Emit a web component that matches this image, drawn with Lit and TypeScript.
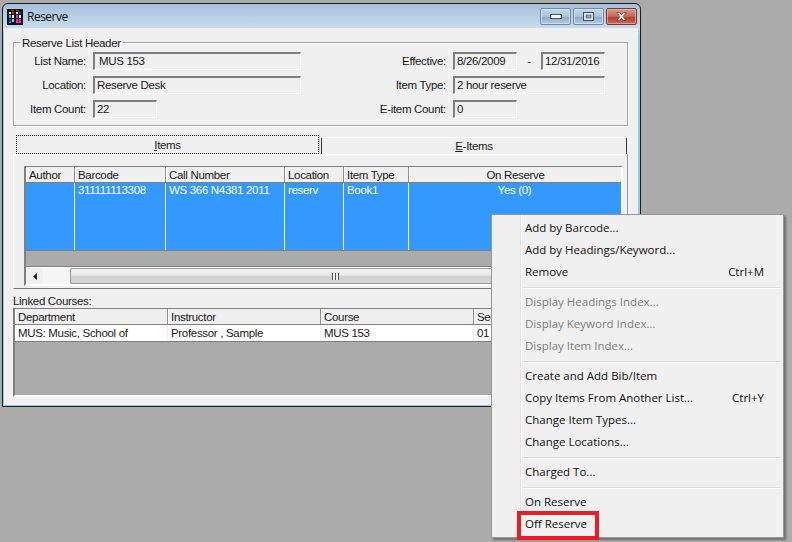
import { LitElement, html, css } from "lit";
import { customElement } from "lit/decorators.js";

const iconCells: [number, number, number, number, string][] = [
  [4, 1, 3, 1, "#e02020"], [9, 1, 3, 1, "#e02020"],
  [2, 3, 2, 2, "#ffffff"], [5, 3, 2, 2, "#ff2020"], [9, 3, 2, 2, "#ffffff"], [12, 3, 2, 2, "#2040ff"],
  [2, 6, 2, 3, "#20c0ff"], [5, 6, 2, 3, "#ffffff"], [9, 6, 2, 3, "#ff20ff"], [12, 6, 2, 3, "#ffffff"],
  [2, 10, 2, 3, "#2040ff"], [5, 10, 2, 3, "#20ffff"], [9, 10, 2, 3, "#ff20c0"], [12, 10, 2, 3, "#ff2080"],
  [2, 13, 2, 1, "#20c0ff"], [9, 13, 5, 1, "#ff20ff"],
];

@customElement("app-root")
export class AppRoot extends LitElement {
  static styles = css`
    :host {
      display: block; width: 792px; height: 542px; position: relative; overflow: hidden;
      background: #ababab; font-family: "Liberation Sans", Arial, sans-serif; font-size: 11.5px;
      color: #1a1a1a; letter-spacing: -0.32px;
    }
    .window {
      position: absolute; left: 2px; top: 3px; width: 639px; height: 404px; box-sizing: border-box;
      border: 1px solid #1c1c1c; border-radius: 6px 6px 0 0; padding: 0 2px 1px 1px;
      background: linear-gradient(#a6c0db, #c8dbec 24px, #8fd0ee 30px);
      display: flex; flex-direction: column;
    }
    .titlebar { height: 24px; display: flex; align-items: center; padding: 0 1px 0 3px; flex: none; }
    .app-icon { width: 16px; height: 16px; margin-top: 1px; display: block; }
    .title { margin-left: 4px; font: 12px "Open Sans", sans-serif; letter-spacing: -0.5px; color: #111; flex: 1; }
    .caps { display: flex; gap: 2px; margin-top: 1px; }
    .cap {
      width: 31px; height: 17px; box-sizing: border-box; border: 1px solid #6f8aa8; border-radius: 2px;
      background: linear-gradient(#c3d5e8, #a9c2dc 50%, #8fabca 55%, #b5cce2);
      display: flex; align-items: center; justify-content: center; box-shadow: inset 0 0 0 1px #dce8f3aa;
    }
    .cap.close { border-color: #7a3a33; background: linear-gradient(#dd9a8c, #c9644f 50%, #b33c2a 55%, #cf6a58); box-shadow: inset 0 0 0 1px #eeb9aeaa; }
    .client { flex: 1; background: #f0f0f0; padding: 14px 9px 0 10px; display: flex; flex-direction: column; width: 634px; box-sizing: border-box; }
    .group {
      position: relative; height: 84px; width: 615px; box-sizing: border-box; margin-left: -1px;
      border: 1px solid #a3a3a3; box-shadow: inset 1px 1px 0 #fff, 1px 1px 0 #fff; flex: none;
      padding: 9px 0 0 0; display: flex;
    }
    .legend { position: absolute; left: 7px; top: -6px; background: #f0f0f0; padding: 0 2px 0 1px; line-height: 13px; white-space: nowrap; }
    .col { display: flex; flex-direction: column; gap: 6px; }
    .left { width: 288px; }
    .right { flex: 1; }
    .row { display: flex; align-items: center; height: 18px; }
    .lab { text-align: right; flex: none; }
    .left .lab { width: 72px; margin-right: 7px; }
    .right .lab { width: 144px; margin-right: 7px; }
    .field {
      height: 18px; box-sizing: border-box; background: #f0f0f0; line-height: 15px; padding-left: 2px; white-space: nowrap;
      border-style: solid; border-width: 2px 1px 1px 2px; border-color: #7e7e7e #fff #fff #7e7e7e; overflow: hidden; flex: none;
    }
    .w208 { width: 208px; } .w64 { width: 64px; } .w152 { width: 152px; }
    .pad { padding-left: 4px; }
    .dash { width: 24px; text-align: center; flex: none; }
    .tabs { display: flex; margin: 9px 0 0 2px; height: 19px; align-items: flex-end; flex: none; }
    .tab { height: 17px; box-sizing: border-box; text-align: center; line-height: 16px; background: #f0f0f0; }
    .tab u { text-decoration: underline; text-underline-offset: 1px; }
    .tab.on { width: 303px; height: 19px; line-height: 20px; outline: 1px dotted #111; outline-offset: -1px; box-shadow: 1px 0 0 #d0d0d0; }
    .tab.off { width: 306px; margin-left: 2px; border-top: 1px solid #fff; border-left: 1px solid #333; border-right: 1px solid #333; border-radius: 2px 2px 0 0; }
    .panel {
      height: 135px; width: 615px; margin-left: -1px; box-sizing: border-box; flex: none; padding: 11px 5px 0 10px;
      border: 1px solid #fff; border-right-color: #9a9a9a; border-bottom-color: #777; border-top-color: #fff; border-left-color: #fff;
      box-shadow: inset 0 1px 0 #f8f8f8;
    }
    .grid { border: 2px solid #808080; border-top-width: 1px; border-bottom-color: #fff; border-right-color: #fff; box-sizing: border-box; background: #ababab; display: flex; flex-direction: column; overflow: hidden; }
    .grid.a { height: 120px; width: 599px; }
    .grid.b { height: 89px; width: 614px; margin-left: -1px; flex: none; }
    .cells { display: grid; flex: none; }
    .grid.a .cells { grid-template-columns: 49px 91px 119px 59px 65px 214px; }
    .grid.b .cells { grid-template-columns: 153px 153px 153px 155px; }
    .th {
      height: 15px; line-height: 14px; padding: 1px 0 0 3px; background: #f0f0f0; box-sizing: border-box; white-space: nowrap; overflow: hidden;
      border-right: 1px solid #909090; box-shadow: inset 1px 0 0 #fff;
    }
    .th.center { padding-left: 0; }
    .rowline { grid-column: 1 / -1; height: 1px; background: #808080; }
    .td { padding-left: 3px; box-sizing: border-box; white-space: nowrap; overflow: hidden; line-height: 15px; }
    .sel .td { height: 67px; background: #3399ff; color: #fff; border-right: 1px solid #fff; }
    .white .td { height: 16px; padding-top: 1px; background: #fff; border-right: 1px solid #f0f0f0; }
    .center { text-align: center; padding-left: 0; }
    .sel .center { padding-right: 2px; }
    .grey { flex: 1; background: #ababab; }
    .hline { height: 1px; background: #808080; flex: none; }
    .scroll { height: 17px; flex: none; display: flex; background: #f5f5f5; border-top: 1px solid #fff; box-sizing: border-box; }
    .arrow { width: 17px; background: #f0f0f0; display: flex; align-items: center; justify-content: center; flex: none; }
    .track { width: 27px; flex: none; }
    .thumb {
      flex: 1; border: 1px solid #9a9a9a; border-radius: 2px; box-sizing: border-box; position: relative;
      background: linear-gradient(#f3f3f3, #e6e6e6 45%, #cfcfcf 55%, #d6d6d6);
      display: flex; padding-left: 261px; align-items: center;
    }
    .grip { width: 7px; height: 7px; background: repeating-linear-gradient(90deg, #555 0 1px, #eee 1px 2px, #eee 2px 3px); }
    .linked { margin: 5px 0 0 -1px; height: 14px; line-height: 14px; flex: none; }
    .menu {
      position: absolute; left: 491px; top: 214px; width: 293px; height: 324px; box-sizing: border-box;
      background: #f0f0f0; border: 1px solid #979797; box-shadow: 2px 2px 2px #6e6e6e;
      font: 11.5px "Open Sans", sans-serif; letter-spacing: 0; color: #111; padding-top: 2px;
      display: flex; flex-direction: column;
    }
    .menu::before { content: ""; position: absolute; left: 28px; top: 0; bottom: 0; width: 1px; background: #e2e2e2; box-shadow: 1px 0 0 #fff; }
    .mi { height: 22px; line-height: 22px; padding: 0 19px 0 33px; display: flex; justify-content: space-between; flex: none; }
    .mi.dis { color: #7d7d7d; }
    .sep { height: 8px; flex: none; display: flex; align-items: center; padding-left: 29px; padding-right: 2px; }
    .sep::after { content: ""; display: block; width: 100%; height: 1px; background: #dcdcdc; box-shadow: 0 1px 0 #fff; }
    .mark { position: absolute; left: 25px; top: 296px; width: 82px; height: 29px; box-sizing: border-box; border: 4px solid #ed1c24; pointer-events: none; }
  `;

  private menuItem(label: string, shortcut = "", dis = false) {
    return html`<div class="mi ${dis ? "dis" : ""}"><span>${label}</span><span>${shortcut}</span></div>`;
  }

  render() {
    return html`
      <div class="window">
        <div class="titlebar">
          <svg class="app-icon" viewBox="0 0 16 16" shape-rendering="crispEdges">
            <rect width="16" height="16" fill="#111"></rect>
            ${iconCells.map(([x, y, w, h, c]) => html`<svg><rect x=${x} y=${y} width=${w} height=${h} fill=${c}></rect></svg>`)}
          </svg>
          <div class="title">Reserve</div>
          <div class="caps">
            <div class="cap">
              <svg width="12" height="6" viewBox="0 0 12 6"><rect x="0.5" y="0.5" width="11" height="4" fill="#f2f5f8" stroke="#4a5a6c"></rect></svg>
            </div>
            <div class="cap">
              <svg width="11" height="9" viewBox="0 0 11 9"><rect x="0.5" y="0.5" width="10" height="8" fill="#dfe7ef" stroke="#3f4f60"></rect><rect x="3" y="3" width="5" height="3" fill="#8fa6bd" stroke="#3f4f60" stroke-width="0.6"></rect></svg>
            </div>
            <div class="cap close">
              <svg width="13" height="11" viewBox="0 0 13 11"><path d="M1.5 1.5h3l2 2.2 2-2.2h3L8 5.5l3.5 4h-3l-2-2.2-2 2.2h-3L5 5.5z" fill="#f6f1ef" stroke="#7b3a30" stroke-width="0.7"></path></svg>
            </div>
          </div>
        </div>
        <div class="client">
          <div class="group">
            <div class="legend">Reserve List Header</div>
            <div class="col left">
              <div class="row"><div class="lab">List Name:</div><div class="field w208 pad">MUS 153</div></div>
              <div class="row"><div class="lab">Location:</div><div class="field w208">Reserve Desk</div></div>
              <div class="row"><div class="lab">Item Count:</div><div class="field w64">22</div></div>
            </div>
            <div class="col right">
              <div class="row"><div class="lab">Effective:</div><div class="field w64">8/26/2009</div><div class="dash">-</div><div class="field w64">12/31/2016</div></div>
              <div class="row"><div class="lab">Item Type:</div><div class="field w152">2 hour reserve</div></div>
              <div class="row"><div class="lab">E-item Count:</div><div class="field w64">0</div></div>
            </div>
          </div>
          <div class="tabs">
            <div class="tab on"><u>I</u>tems</div>
            <div class="tab off"><u>E</u>-Items</div>
          </div>
          <div class="panel">
            <div class="grid a">
              <div class="cells">
                <div class="th">Author</div><div class="th">Barcode</div><div class="th">Call Number</div>
                <div class="th">Location</div><div class="th">Item Type</div><div class="th center">On Reserve</div>
                <div class="rowline"></div>
              </div>
              <div class="cells sel">
                <div class="td"></div><div class="td">311111113308</div><div class="td">WS 366 N4381 2011</div>
                <div class="td">reserv</div><div class="td">Book1</div><div class="td center">Yes (0)</div>
              </div>
              <div class="hline"></div>
              <div class="grey"></div>
              <div class="hline"></div>
              <div class="scroll">
                <div class="arrow"><svg width="4" height="7" viewBox="0 0 4 7"><path d="M4 0v7L0 3.5z" fill="#222"></path></svg></div>
                <div class="track"></div>
                <div class="thumb"><div class="grip"></div></div>
              </div>
            </div>
          </div>
          <div class="linked">Linked Courses:</div>
          <div class="grid b">
            <div class="cells">
              <div class="th">Department</div><div class="th">Instructor</div><div class="th">Course</div><div class="th">Section</div>
              <div class="rowline"></div>
            </div>
            <div class="cells white">
              <div class="td">MUS: Music, School of</div><div class="td">Professor , Sample</div><div class="td">MUS 153</div><div class="td">01</div>
            </div>
            <div class="hline"></div>
            <div class="grey"></div>
          </div>
        </div>
      </div>
      <div class="menu">
        ${this.menuItem("Add by Barcode...")}
        ${this.menuItem("Add by Headings/Keyword...")}
        ${this.menuItem("Remove", "Ctrl+M")}
        <div class="sep"></div>
        ${this.menuItem("Display Headings Index...", "", true)}
        ${this.menuItem("Display Keyword Index...", "", true)}
        ${this.menuItem("Display Item Index...", "", true)}
        <div class="sep"></div>
        ${this.menuItem("Create and Add Bib/Item")}
        ${this.menuItem("Copy Items From Another List...", "Ctrl+Y")}
        ${this.menuItem("Change Item Types...")}
        ${this.menuItem("Change Locations...")}
        <div class="sep"></div>
        ${this.menuItem("Charged To...")}
        <div class="sep"></div>
        ${this.menuItem("On Reserve")}
        ${this.menuItem("Off Reserve")}
        <div class="mark"></div>
      </div>
    `;
  }
}
